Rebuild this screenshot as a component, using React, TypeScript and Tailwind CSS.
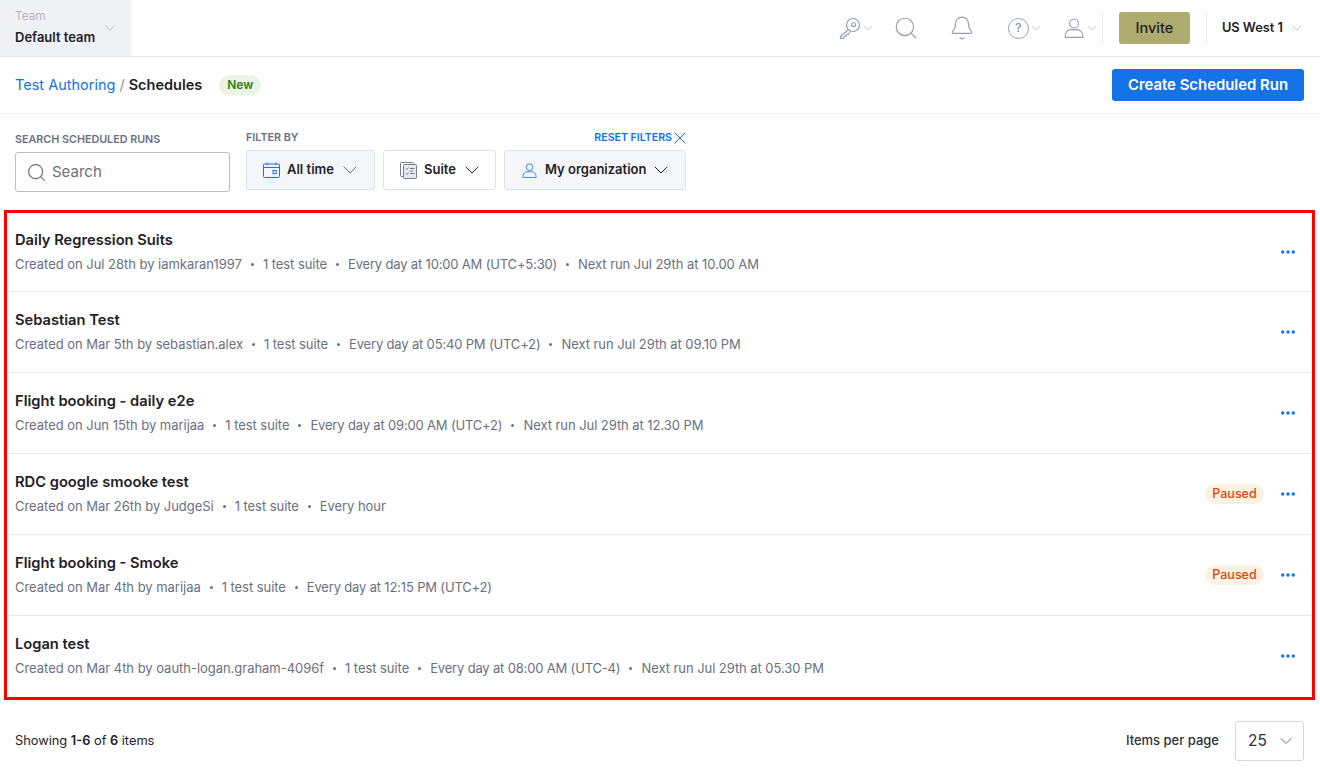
import { FC } from "react";
import { ChevronDown, Search, Bell, X, Ellipsis } from "lucide-react";

interface Schedule {
    name: string;
    parts: string[];
    paused?: boolean;
}

const schedules: Schedule[] = [
    {
        name: "Daily Regression Suits",
        parts: [
            "Created on Jul 28th by iamkaran1997",
            "1 test suite",
            "Every day at 10:00 AM (UTC+5:30)",
            "Next run Jul 29th at 10.00 AM",
        ],
    },
    {
        name: "Sebastian Test",
        parts: [
            "Created on Mar 5th by sebastian.alex",
            "1 test suite",
            "Every day at 05:40 PM (UTC+2)",
            "Next run Jul 29th at 09.10 PM",
        ],
    },
    {
        name: "Flight booking - daily e2e",
        parts: [
            "Created on Jun 15th by marijaa",
            "1 test suite",
            "Every day at 09:00 AM (UTC+2)",
            "Next run Jul 29th at 12.30 PM",
        ],
    },
    {
        name: "RDC google smooke test",
        parts: ["Created on Mar 26th by JudgeSi", "1 test suite", "Every hour"],
        paused: true,
    },
    {
        name: "Flight booking - Smoke",
        parts: ["Created on Mar 4th by marijaa", "1 test suite", "Every day at 12:15 PM (UTC+2)"],
        paused: true,
    },
    {
        name: "Logan test",
        parts: [
            "Created on Mar 4th by oauth-logan.graham-4096f",
            "1 test suite",
            "Every day at 08:00 AM (UTC-4)",
            "Next run Jul 29th at 05.30 PM",
        ],
    },
];

const KeyIcon = () => (
    <svg width="22" height="22" viewBox="0 0 22 22" fill="none" stroke="#9a9fb0" strokeWidth="1.2">
        <circle cx="14" cy="8" r="6.5" />
        <circle cx="14.5" cy="7.5" r="2" />
        <path d="M9.5 12.5 1.5 19.5v1.8h3l.6-2h2l.4-2h2l2-3.3" strokeLinejoin="round" />
    </svg>
);

const UserIcon: FC<{ color: string; size: number }> = ({ color, size }) => (
    <svg width={size} height={size} viewBox="0 0 20 20" fill="none" stroke={color} strokeWidth="1.1">
        <circle cx="10" cy="5.6" r="4.4" />
        <path d="M1.2 19.4v-1.6c0-3.6 3-6.2 5.6-6.2h6.4c2.6 0 5.6 2.6 5.6 6.2v1.6z" strokeLinejoin="round" />
    </svg>
);

const CalendarIcon = () => (
    <svg width="17" height="16" viewBox="0 0 17 16" fill="none" stroke="#1473e6" strokeWidth="1">
        <rect x="0.5" y="2" width="16" height="13.5" rx="1" />
        <path d="M0.5 5.5h16M4 0.5v2.5M13 0.5v2.5" />
        <rect x="10" y="8.5" width="3.2" height="3.2" />
    </svg>
);

const SuiteIcon = () => (
    <svg width="17" height="17" viewBox="0 0 17 17" fill="none" stroke="#777c8c" strokeWidth="1">
        <path d="M3 14.5H1.5a1 1 0 0 1-1-1V1.5a1 1 0 0 1 1-1h11a1 1 0 0 1 1 1V2" />
        <rect x="3.5" y="2.5" width="13" height="14" rx="1" fill="#e8e9ee" />
        <path d="M6 6.5l1 1 1.5-2M10 6.5h4.5M6 11.5l1 1 1.5-2M10 11.5h4.5M10 9h3" />
    </svg>
);

const NavCaret = () => <ChevronDown className="h-[14px] w-[14px] text-[#b5b8c4]" strokeWidth={1.4} />;

const MetaLine: FC<{ parts: string[] }> = ({ parts }) => (
    <div className="mt-[4px] flex items-center text-[13px] leading-[20px] text-[#6b7080]">
        {parts.map((part, i) => (
            <div key={part} className="flex items-center">
                {i > 0 && <span className="mx-[9px] h-[3px] w-[3px] rounded-full bg-[#6b7080]" />}
                <span
                    className={
                        i === 0
                            ? "tracking-[-0.03px]"
                            : part.startsWith("Every day")
                              ? "tracking-[-0.17px]"
                              : "tracking-[-0.06px]"
                    }
                >
                    {part}
                </span>
            </div>
        ))}
    </div>
);

const ScheduleRow: FC<{ item: Schedule; index: number; last: boolean }> = ({ item, index, last }) => (
    <div
        className={`flex items-center justify-between pl-[8px] pr-[15px] ${
            index === 0 ? "h-[79px]" : last ? "h-[80px]" : "h-[81px]"
        } ${last ? "" : "border-b border-[#e8e9f1]"}`}
    >
        <div>
            <div className="text-[14.7px] leading-[20px] font-semibold text-[#1f2128]">{item.name}</div>
            <MetaLine parts={item.parts} />
        </div>
        <div className="flex items-center">
            {item.paused && (
                <span className="mr-[15px] flex h-[20px] w-[59px] items-center justify-center rounded-full bg-[#fdf1e1] text-[12.5px] font-medium text-[#d4480e]">
                    Paused
                </span>
            )}
            <Ellipsis className="h-[18px] w-[18px] text-[#1473e6]" strokeWidth={2.6} />
        </div>
    </div>
);

export default function App() {
    return (
        <div className="h-[776px] w-[1320px] overflow-hidden bg-white font-['Inter',sans-serif]">
            <header className="flex h-[57px] items-center border-b border-[#e6e7ef]">
                <div className="relative h-[56px] w-[131px] bg-[#f0f1f5] pl-[15px] pt-[8px]">
                    <div className="text-[12px] leading-[16px] font-light text-[#a7aab5]">Team</div>
                    <div className="mt-[4px] text-[13px] leading-[18px] font-semibold text-[#1f2128]">Default team</div>
                    <ChevronDown className="absolute right-[12px] top-[19px] h-[18px] w-[18px] text-[#a7aab5]" strokeWidth={1} />
                </div>
                <div className="ml-auto flex items-center">
                    <div className="flex items-center"><KeyIcon /><NavCaret /></div>
                    <Search className="ml-[18px] h-[26px] w-[26px] text-[#9a9fb0]" strokeWidth={1.1} />
                    <Bell className="ml-[30px] h-[26px] w-[26px] text-[#9a9fb0]" strokeWidth={1.1} />
                    <div className="ml-[33px] flex items-center">
                        <span className="flex h-[21px] w-[21px] items-center justify-center rounded-full border border-[#9a9fb0] text-[12px] font-medium text-[#8b8f9f]">?</span>
                        <NavCaret />
                    </div>
                    <div className="ml-[21px] flex items-center">
                        <UserIcon color="#9a9fb0" size={20} />
                        <span className="ml-[1px]"><NavCaret /></span>
                    </div>
                    <div className="ml-[3px] h-[32px] w-px bg-[#e6e7ef]" />
                    <button className="ml-[16px] h-[32px] w-[71px] rounded-[3px] bg-[#aeab6e] text-[14.5px] font-medium text-[#1f2128]">Invite</button>
                    <div className="ml-[16px] h-[32px] w-px bg-[#e6e7ef]" />
                    <span className="ml-[15px] text-[12.8px] font-semibold text-[#1f2128]">US West 1</span>
                    <ChevronDown className="ml-[6px] mr-[15px] h-[16px] w-[16px] text-[#a7aab5]" strokeWidth={1.1} />
                </div>
            </header>

            <div className="flex h-[57px] items-center justify-between border-b border-[#eeeff4] pl-[15px] pr-[16px]">
                <div className="flex items-center text-[14.5px]">
                    <span className="text-[#1473e6]">Test Authoring</span>
                    <span className="mx-[4px] text-[#8b8f9f]">/</span>
                    <span className="font-semibold text-[#1f2128]">Schedules</span>
                    <span className="ml-[17px] flex h-[20px] w-[42px] items-center justify-center rounded-full bg-[#e9f5e3] text-[12px] font-semibold text-[#2f7d12]">New</span>
                </div>
                <button className="h-[32px] w-[192px] rounded-[3px] bg-[#1473e6] text-[14.9px] font-semibold text-white">Create Scheduled Run</button>
            </div>

            <div className="flex h-[96px] items-start pl-[15px] pt-[17px]">
                <div className="w-[215px] pt-[2px]">
                    <div className="text-[10.75px] leading-[14px] font-semibold text-[#6b7080]">SEARCH SCHEDULED RUNS</div>
                    <div className="mt-[5px] flex h-[40px] items-center rounded-[3px] border border-[#b9bdcb] pl-[10px]">
                        <Search className="h-[21px] w-[21px] text-[#6b7080]" strokeWidth={1.3} />
                        <span className="ml-[5px] text-[15px] text-[#6b7080]">Search</span>
                    </div>
                </div>
                <div className="ml-[16px] w-[440px]">
                    <div className="flex h-[14px] items-center justify-between">
                        <span className="text-[10.75px] font-semibold text-[#6b7080]">FILTER BY</span>
                        <span className="flex items-center text-[10.6px] font-semibold text-[#1473e6]">
                            RESET FILTERS <X className="-my-[4px] -mr-[4px] -ml-[2px] h-[20px] w-[20px]" strokeWidth={1.2} />
                        </span>
                    </div>
                    <div className="mt-[5px] flex items-center">
                        <div className="flex h-[40px] w-[129px] items-center rounded-[3px] border border-[#e0e2eb] bg-[#f5f6f9] pl-[16px]">
                            <CalendarIcon />
                            <span className="ml-[7px] text-[13px] font-semibold text-[#1f2128]">All time</span>
                            <ChevronDown className="ml-[4px] h-[24px] w-[24px] text-[#6b7080]" strokeWidth={1} />
                        </div>
                        <div className="ml-[8px] flex h-[40px] w-[113px] items-center rounded-[3px] border border-[#e0e2eb] pl-[16px]">
                            <SuiteIcon />
                            <span className="ml-[7px] text-[13px] font-semibold text-[#1f2128]">Suite</span>
                            <ChevronDown className="ml-[4px] h-[24px] w-[24px] text-[#1f2128]" strokeWidth={1} />
                        </div>
                        <div className="ml-[8px] flex h-[40px] w-[182px] items-center rounded-[3px] border border-[#e0e2eb] bg-[#f5f6f9] pl-[17px]">
                            <UserIcon color="#1473e6" size={15} />
                            <span className="ml-[8px] text-[13px] font-semibold text-[#1f2128]">My organization</span>
                            <ChevronDown className="ml-[3px] h-[24px] w-[24px] text-[#1f2128]" strokeWidth={1} />
                        </div>
                    </div>
                </div>
            </div>

            <div className="mx-[4px] h-[490px] w-[1311px] border-[3px] border-[#ff0000]">
                {schedules.map((item, i) => (
                    <ScheduleRow key={item.name} item={item} index={i} last={i === schedules.length - 1} />
                ))}
            </div>

            <div className="flex h-[76px] items-center justify-between pt-[6px] pl-[15px] pr-[16px]">
                <div className="text-[12.8px] text-[#1f2128]">
                    Showing <span className="font-semibold">1-6</span> of <span className="font-semibold">6</span> items
                </div>
                <div className="flex items-center">
                    <span className="text-[13px] font-medium text-[#2f3138]">Items per page</span>
                    <div className="ml-[16px] flex h-[40px] w-[69px] items-center rounded-[3px] border border-[#d5d7e0] pl-[12px]">
                        <span className="text-[15.5px] text-[#2f3138]">25</span>
                        <ChevronDown className="ml-[9px] h-[20px] w-[20px] text-[#6b7080]" strokeWidth={1.2} />
                    </div>
                </div>
            </div>
        </div>
    );
}
